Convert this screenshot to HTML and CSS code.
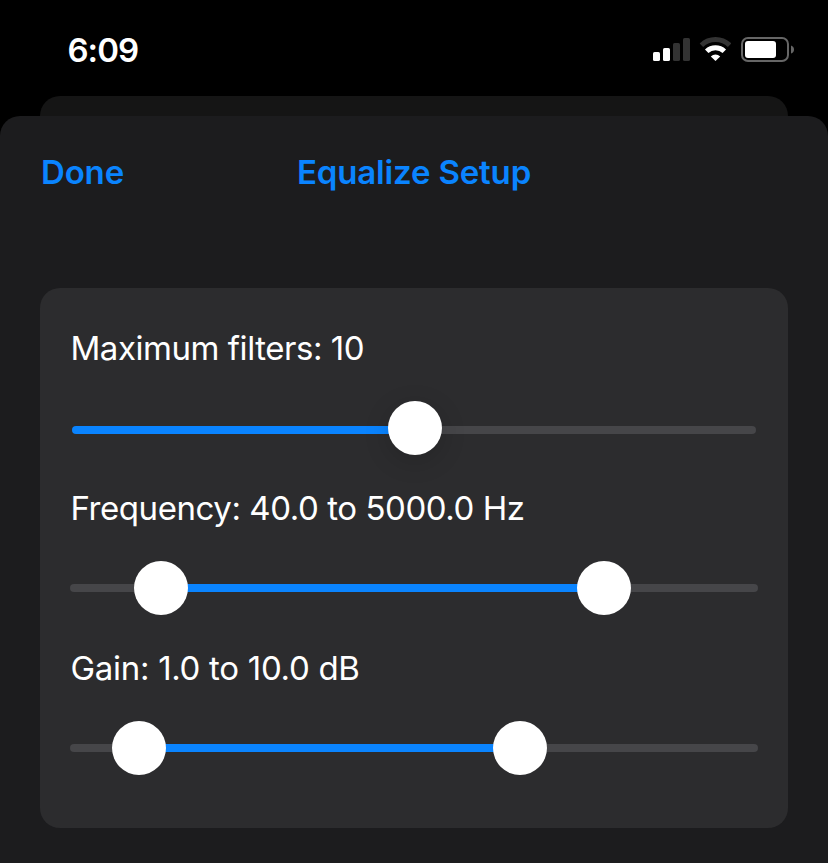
FILE: index.html
```html
<!DOCTYPE html>
<html lang="en">
<head>
<meta charset="utf-8">
<title>Equalize Setup</title>
<link rel="stylesheet" href="styles.css">
</head>
<body>
<header class="status">
  <span class="time">6:09</span>
  <div class="indicators">
    <svg class="signal" width="38" height="24" viewBox="0 0 38 24">
      <rect x="0" y="14" width="7" height="9" rx="1.6" fill="#fff"/>
      <rect x="10" y="10" width="7" height="13" rx="1.6" fill="#fff"/>
      <rect x="20" y="5" width="7" height="18" rx="1.6" fill="#333"/>
      <rect x="30" y="0" width="7" height="23" rx="1.6" fill="#333"/>
    </svg>
    <svg class="wifi" width="32" height="25" viewBox="0 0 32 25">
      <path d="M2.4 8.2 A20.4 20.4 0 0 1 30.6 8.2" fill="none" stroke="#333" stroke-width="5"/>
      <path d="M7.7 14.2 A12.8 12.8 0 0 1 25.3 14.2" fill="none" stroke="#fff" stroke-width="5"/>
      <path d="M16.5 24 L11.8 19.4 A7 7 0 0 1 21.2 19.4 Z" fill="#fff"/>
    </svg>
    <svg class="battery" width="53" height="25" viewBox="0 0 53 25">
      <rect x="1" y="1" width="46" height="23" rx="6" fill="none" stroke="#666" stroke-width="2"/>
      <rect x="4" y="4" width="31" height="17" rx="3" fill="#fff"/>
      <path d="M50 8.5 Q53 9.5 53 12.5 Q53 15.5 50 16.5 Z" fill="#666"/>
    </svg>
  </div>
</header>
<div class="back-sheet"></div>
<main class="sheet">
  <nav class="bar">
    <a class="done">Done</a>
    <h1 class="title">Equalize Setup</h1>
  </nav>
  <section class="card">
    <div class="setting">
      <div class="label max">Maximum filters: 10</div>
      <div class="slider single">
        <i class="fill lead"></i><b class="thumb"></b><i class="rest tail"></i>
      </div>
    </div>
    <div class="setting">
      <div class="label freq">Frequency: 40.0 to 5000.0 Hz</div>
      <div class="slider frequency">
        <i class="rest lead"></i><b class="thumb"></b><i class="fill"></i><b class="thumb"></b><i class="rest tail"></i>
      </div>
    </div>
    <div class="setting">
      <div class="label gain-label">Gain: 1.0 to 10.0 dB</div>
      <div class="slider gain">
        <i class="rest lead"></i><b class="thumb"></b><i class="fill"></i><b class="thumb"></b><i class="rest tail"></i>
      </div>
    </div>
  </section>
</main>
</body>
</html>
```
FILE: styles.css
```css
* { box-sizing: border-box; }
body {
  margin: 0;
  height: 863px;
  overflow: hidden;
  display: flex;
  flex-direction: column;
  background: #000;
  color: #fff;
  font-family: Inter, "Liberation Sans", sans-serif;
}
svg { display: block; }
.status {
  height: 96px;
  flex: none;
  display: flex;
  justify-content: space-between;
  padding: 0 34px 0 67.5px;
}
.time {
  margin-top: 30px;
  line-height: 40px;
  font-size: 33px;
  font-weight: 600;
  letter-spacing: -1px;
}
.indicators { display: flex; align-items: flex-start; padding-top: 37px; }
.signal { margin: 1px 8px 0 0; }
.wifi { margin-right: 10px; }
.back-sheet {
  height: 20px;
  flex: none;
  margin: 0 40px;
  border-radius: 20px 20px 0 0;
  background: #151515;
}
.sheet {
  flex: 1;
  background: #1c1c1e;
  border-radius: 20px 20px 0 0;
  padding: 0 40px;
}
.bar {
  height: 172px;
  padding-top: 36px;
  display: grid;
  grid-template-columns: 1fr auto 1fr;
  color: #0a84ff;
  line-height: 40px;
  font-size: 33px;
  font-weight: 600;
  letter-spacing: -0.15px;
}
.done { padding-left: 1px; }
.title { grid-column: 2; margin: 0; font: inherit; }
.card {
  height: 540px;
  border-radius: 20px;
  background: #2c2c2e;
  padding: 40px 30px 0;
}
.setting { height: 160px; }
.label {
  height: 40px;
  padding-left: 0.5px;
  line-height: 40px;
  font-size: 33px;
  white-space: nowrap;
}
.max { letter-spacing: -0.45px; }
.freq { letter-spacing: -0.44px; }
.gain-label { letter-spacing: -0.3px; }
.slider {
  height: 54px;
  margin-top: 33px;
  display: grid;
  align-items: center;
}
.single {
  grid-template-columns: 316px 54px 314px;
  padding-left: 2px;
}
.frequency { grid-template-columns: 64px 54px 389px 54px 127px; }
.gain { grid-template-columns: 42px 54px 327px 54px 211px; }
.fill, .rest { height: 8px; background: #0a84ff; margin: 0 -4px; }
.rest { background: #464649; }
.lead { border-radius: 4px 0 0 4px; margin-left: 0; }
.tail { border-radius: 0 4px 4px 0; margin-right: 0; }
.single .fill, .single .rest { position: relative; top: 2px; }
.thumb {
  position: relative;
  z-index: 1;
  height: 54px;
  border-radius: 50%;
  background: #fff;
}
.single .thumb { box-shadow: 0 6px 26px rgba(0, 0, 0, .16); }
```
